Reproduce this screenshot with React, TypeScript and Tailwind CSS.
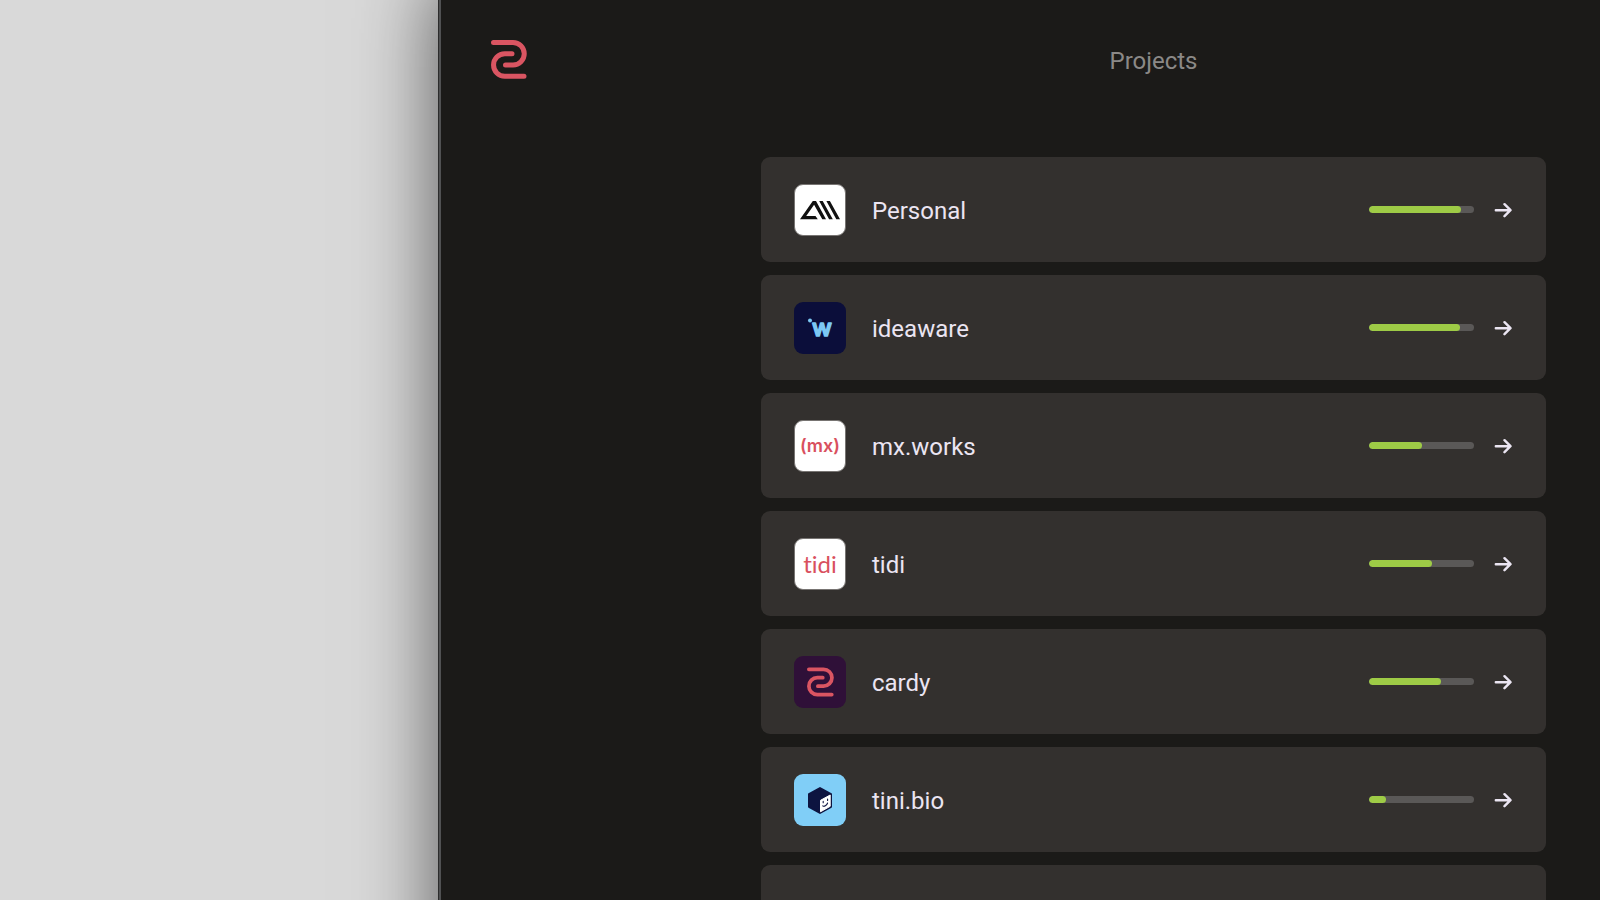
import type { ReactNode } from "react";

interface Project {
  name: string;
  progress: number;
  tile: string;
  logo: ReactNode;
}

function CardyMark({ className }: { className: string }) {
  return (
    <svg viewBox="0 0 36 39" fill="none" stroke="#da5562" strokeWidth="5" strokeLinecap="round" className={className} aria-hidden="true">
      <path d="M2.5 2.5H22a11.25 11.25 0 0 1 0 22.5h-7.5" />
      <path d="M21 13.8h-7.2a11.25 11.25 0 0 0 0 22.5H33" />
    </svg>
  );
}

function PersonalLogo() {
  return (
    <svg viewBox="0 0 52 52" className="size-[52px] shrink-0" aria-hidden="true">
      <path d="M6 35.3 18.8 17H22l10 18.3h-3.7L20.1 20.8 12.2 32H21.5l2.3 3.3z" fill="#111" />
      <path d="M25.2 17h3.5l10.1 18.3h-3.7zM32.4 17h3.5L46 35.3h-3.7z" fill="#111" />
    </svg>
  );
}

function IdeawareLogo() {
  return (
    <svg viewBox="0 0 52 52" className="size-[52px] shrink-0" aria-hidden="true">
      <circle cx="16" cy="18.5" r="2" fill="#7cc8f4" />
      <text
        x="28"
        y="34"
        textAnchor="middle"
        fill="#7cc8f4"
        stroke="#7cc8f4"
        strokeWidth="1.6"
        strokeLinejoin="round"
        className="font-['Inter',sans-serif] text-[24px] font-medium"
      >
        w
      </text>
    </svg>
  );
}

function TiniLogo() {
  return (
    <svg viewBox="0 0 52 52" className="size-[52px] shrink-0" aria-hidden="true">
      <path d="M26 14 37 20.2v12.6L26 39 15 32.8V20.2z" fill="#0d1440" stroke="#0d1440" strokeWidth="2" strokeLinejoin="round" />
      <path d="M26.5 26.3 36.2 21v11.3l-9.7 5.5z" fill="#fff" stroke="#fff" strokeLinejoin="round" />
      <path d="M29.2 27.4v1.4M33.6 25v1.4M28.8 31.8c1.2 1.2 4-.4 4.8-2.8" fill="none" stroke="#0d1440" strokeWidth="1.1" strokeLinecap="round" />
    </svg>
  );
}

const projects: Project[] = [
  { name: "Personal", progress: 88, tile: "border border-[#777472] bg-white", logo: <PersonalLogo /> },
  { name: "ideaware", progress: 87, tile: "bg-[#0b0e3a]", logo: <IdeawareLogo /> },
  {
    name: "mx.works",
    progress: 50,
    tile: "border border-[#777472] bg-white",
    logo: <span className="font-['Inter',sans-serif] text-lg leading-none font-semibold text-[#d9505e]">(mx)</span>,
  },
  {
    name: "tidi",
    progress: 60,
    tile: "border border-[#777472] bg-white",
    logo: (
      <span className="font-['Lato',sans-serif] text-2xl leading-none font-normal text-[#d9505e] [font-variant-ligatures:none]">
        tidi
      </span>
    ),
  },
  { name: "cardy", progress: 69, tile: "bg-[#2f1038]", logo: <CardyMark className="h-[30px] w-[27px]" /> },
  { name: "tini.bio", progress: 16, tile: "bg-[#80cef7]", logo: <TiniLogo /> },
];

function ProjectRow({ project }: { project: Project }) {
  return (
    <a href="#" className="flex h-[105px] items-center rounded-[9px] bg-[#33302e] pr-[34px] pl-[33px]">
      <span className={`flex size-[52px] shrink-0 items-center justify-center overflow-hidden rounded-[9px] ${project.tile}`}>
        {project.logo}
      </span>
      <span className="flex-1 pt-[2px] pl-[26px] text-2xl leading-8 text-[#ebe5f2]">{project.name}</span>
      <span
        role="progressbar"
        aria-label={`${project.name} progress`}
        aria-valuenow={project.progress}
        className="h-[7px] w-[105px] overflow-hidden rounded-full bg-[#5a5857]"
      >
        <span className="block h-full rounded-full bg-[#9ecb46]" style={{ width: `${project.progress}%` }} />
      </span>
      <svg
        viewBox="0 0 18 16"
        className="ml-5 h-4 w-[18px]"
        fill="none"
        stroke="#ebe5f2"
        strokeWidth="2.4"
        strokeLinecap="round"
        strokeLinejoin="round"
        aria-hidden="true"
      >
        <path d="M1.8 8.2H16M10.5 2.2l6 6-6 6" />
      </svg>
    </a>
  );
}

export default function App() {
  return (
    <div className="flex h-screen items-start overflow-hidden bg-[#d9d9d9] pl-[438px] font-['Roboto',sans-serif]">
      <div className="min-w-0 flex-1 border-l border-[#2c2c2c] shadow-[0_-20px_76px_rgba(0,0,0,0.6)]">
        <div className="border-l-2 border-[#505152] bg-[#1b1a18] pr-[54px] pb-40">
          <header className="flex h-[157px] items-start pt-10">
            <div className="w-[320px] shrink-0 pl-[50px]">
              <a href="#" aria-label="Home" className="block w-9">
                <CardyMark className="h-[39px] w-9" />
              </a>
            </div>
            <h1 className="flex-1 pt-[5px] text-center text-2xl leading-8 text-[#8b8987]">Projects</h1>
          </header>

          <main className="flex flex-col gap-[13px] pl-[320px]">
            {projects.map((project) => (
              <ProjectRow key={project.name} project={project} />
            ))}
            <div className="h-[105px] rounded-[9px] bg-[#33302e]" />
          </main>
        </div>
      </div>
    </div>
  );
}
